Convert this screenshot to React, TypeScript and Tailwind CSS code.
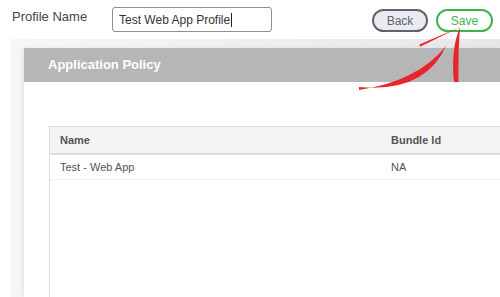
import React from "react";

function Annotation() {
  return (
    <svg
      className="pointer-events-none absolute left-0 top-0"
      width="500"
      height="297"
      viewBox="0 0 500 297"
    >
      <path d="M359 87 Q425 93 446 46 Q418 81 359 90 Z" fill="#e8242c" />
      <path d="M454 82 Q450.5 50 460 27 Q458 52 458.5 82 Z" fill="#e8242c" />
      <path d="M420 46.8 L460 27 L419.5 44.5 Z" fill="#e8242c" />
    </svg>
  );
}

export default function App() {
  return (
    <div className="relative h-[297px] w-[500px] overflow-hidden bg-white font-['Liberation_Sans',Arial,sans-serif]">
      <header className="flex h-[39px] items-start pt-[7px]">
        <span className="ml-[12px] mt-[1px] w-[100px] text-[13px] leading-[18px] text-[#444]">
          Profile Name
        </span>
        <div className="flex h-[25px] w-[160px] items-center rounded-[3px] border border-[#8a8f99] px-[6px] text-[12px] text-[#333]">
          Test Web App Profile
          <span className="ml-[1px] h-[14px] w-px bg-[#222]" />
        </div>
        <div className="ml-auto mr-[7px] mt-[2px] flex gap-[8px]">
          <button className="flex h-[23px] w-[56px] items-center justify-center rounded-full border-2 border-[#5d6373] bg-[#ebebef] text-[12px] text-[#5d6373]">
            Back
          </button>
          <button className="flex h-[23px] w-[57px] items-center justify-center rounded-full border-2 border-[#3bb54a] bg-white text-[12px] text-[#3bb54a]">
            Save
          </button>
        </div>
      </header>

      <div className="ml-[11px] flex h-[258px] overflow-hidden bg-gradient-to-r from-[#f6f6f6] to-[#e7e7e7] pt-[9px] pl-[13px]">
        <section className="flex flex-1 flex-col bg-white shadow-[-2px_0_3px_rgba(0,0,0,0.06)]">
          <div className="flex h-[34px] shrink-0 items-center bg-[#b6b6b6] pl-[24px] text-[13px] font-bold text-white">
            Application Policy
          </div>
          <div className="shrink-0 pl-[25px] pt-[44px]">
            <div className="h-[200px] border-l border-t border-[#dcdcdc]">
              <div className="flex h-[28px] items-center border-b-2 border-[#dedede] bg-[#f4f4f4] text-[11px] font-bold text-[#555]">
                <span className="w-[331px] pl-[10px]">Name</span>
                <span className="pl-[10px]">Bundle Id</span>
              </div>
              <div className="flex h-[25px] items-center border-b border-[#f0f0f0] text-[11px] text-[#555]">
                <span className="w-[331px] pl-[10px]">Test - Web App</span>
                <span className="pl-[10px]">NA</span>
              </div>
            </div>
          </div>
        </section>
      </div>

      <Annotation />
    </div>
  );
}
